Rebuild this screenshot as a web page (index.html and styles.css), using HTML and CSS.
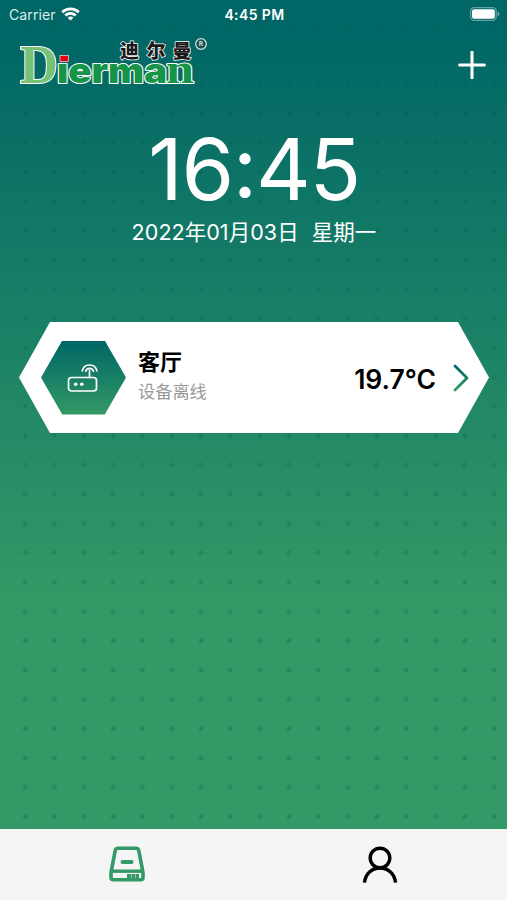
FILE: index.html
```
<!DOCTYPE html>
<html lang="zh-CN">
<head>
    <meta charset="UTF-8">
    <meta name="viewport" content="width=device-width, initial-scale=1.0">
    <title>Dierman</title>
    <link rel="stylesheet" href="styles.css">
</head>
<body>
    <div class="status-bar">
        <div class="carrier">
            <span>Carrier</span>
            <svg width="19" height="14" viewBox="0 0 19 14" fill="none" stroke="#fff" stroke-width="2.7">
                <path d="M1.2 5.2a12 12 0 0 1 16.6 0"/>
                <path d="M4.3 8.5a7.5 7.5 0 0 1 10.4 0"/>
                <path d="M9.5 13.6 6.6 10.8a4.2 4.2 0 0 1 5.8 0z" fill="#fff" stroke="none"/>
            </svg>
        </div>
        <div class="status-time">4:45 PM</div>
        <svg class="battery" width="30" height="14" viewBox="0 0 30 14">
            <rect x=".6" y=".6" width="25.6" height="12.8" rx="3.6" fill="none" stroke="#fff" stroke-opacity=".4" stroke-width="1.2"/>
            <rect x="2" y="2.2" width="22.8" height="9.6" rx="2" fill="#fff"/>
            <path d="M27.6 4.8q1.8.6 1.8 2.2t-1.8 2.2z" fill="#fff" fill-opacity=".5"/>
        </svg>
    </div>

    <header class="header">
        <svg class="logo" width="200" height="60" viewBox="0 0 200 60">
            <text class="logo-d" x="5" y="46.500" textLength="38" lengthAdjust="spacingAndGlyphs">D</text>
            <text class="logo-name" x="42" y="46.500" textLength="110" lengthAdjust="spacingAndGlyphs">ıerma</text>
            <text class="logo-n" x="151" y="46.500" textLength="28" lengthAdjust="spacingAndGlyphs">n</text>
            <rect x="45" y="19.500" width="8.500" height="6" fill="#e60012" stroke="#fff" stroke-width=".6"/>
            <text class="logo-cn" x="105 131.500 157.500" y="21.500">迪尔曼</text>
            <circle cx="186" cy="8" r="5.300" fill="#333" fill-opacity=".45" stroke="#d5dddd" stroke-width="1.300"/>
            <text class="logo-reg" x="183.700" y="10.300">R</text>
        </svg>
        <svg class="add" width="28" height="28" viewBox="0 0 28 28">
            <path d="M1.6 14h24.8M14 1.2v25.6" stroke="#fff" stroke-width="3" stroke-linecap="round"/>
        </svg>
    </header>

    <main class="content">
        <div class="clock">16<span class="colon">:</span>45</div>
        <div class="date"><span>2022年01月03日</span><span>星期一</span></div>

        <div class="device-card">
            <div class="device-icon">
                <svg width="32" height="30" viewBox="0 0 32 30" fill="none" stroke="#fff" stroke-width="1.700" stroke-linecap="round">
                    <rect x="1.500" y="14.500" width="28" height="13.500" rx="3"/>
                    <path d="M22.500 14.500V7.500M15.300 7.800a7.500 7.500 0 0 1 14.600 0M18.700 8.300a4.100 4.100 0 0 1 7.800 0"/>
                    <circle cx="8.700" cy="21.300" r="1.800" fill="#fff" stroke="none"/>
                    <circle cx="14.800" cy="21.300" r="1.800" fill="#fff" stroke="none"/>
                </svg>
            </div>
            <div class="device-info">
                <div class="device-name">客厅</div>
                <div class="device-state">设备离线</div>
            </div>
            <div class="temperature">19.7°C</div>
            <svg class="arrow" width="16" height="28" viewBox="0 0 16 28">
                <defs>
                    <linearGradient id="arrow-gradient" x1="0" y1="0" x2="0" y2="1">
                        <stop offset="0" stop-color="#006666"/>
                        <stop offset="1" stop-color="#339966"/>
                    </linearGradient>
                </defs>
                <path d="M2 2l12 12L2 26" fill="none" stroke="url(#arrow-gradient)" stroke-width="2.8" stroke-linecap="round" stroke-linejoin="round"/>
            </svg>
        </div>
    </main>

    <nav class="tab-bar">
        <a class="tab">
            <svg width="38" height="38" viewBox="0 0 38 38" fill="none" stroke="#339966" stroke-width="3.6" stroke-linejoin="round">
                <path d="M10 3.200h18q2.400 0 2.800 2.400L35 27.500v5q0 2.300-2.300 2.300H5.300Q3 34.800 3 32.500v-5L7.200 5.600q.4-2.400 2.800-2.400z"/>
                <path d="M3.500 26.200h31" stroke-width="3.400"/>
                <path d="M14.500 17h9" stroke-width="4" stroke-linecap="round"/>
                <path d="M19 31h12" stroke-width="3.800" stroke-dasharray="4 .5"/>
            </svg>
        </a>
        <a class="tab">
            <svg width="38" height="38" viewBox="0 0 38 38" fill="none" stroke="#000" stroke-width="3.4">
                <circle cx="19" cy="13" r="9.800"/>
                <path d="M3.500 37.700C4.200 28.700 11 23 19 23s14.800 5.700 15.500 14.700"/>
            </svg>
        </a>
    </nav>
</body>
</html>
```
FILE: styles.css
```
* {
    box-sizing: border-box;
}

body {
    margin: 0;
    height: 900px;
    display: flex;
    flex-direction: column;
    overflow: hidden;
    font-family: Inter, "Noto Sans CJK SC", sans-serif;
    color: #fff;
    background:
        radial-gradient(circle at center, rgba(0, 90, 80, 0.27) 1.5px, transparent 3px) 10.6px 10.6px / 29.32px 29.32px,
        linear-gradient(#006666 30px, #339966 600px);
}

.status-bar {
    height: 28px;
    padding: 0 7px 0 9px;
    display: grid;
    grid-template-columns: 1fr auto 1fr;
    align-items: center;
    font-size: 14px;
}

.carrier {
    display: flex;
    align-items: center;
    gap: 5px;
    letter-spacing: 0.1px;
    color: #dceceb;
}

.status-time {
    font-weight: 600;
    letter-spacing: 0.4px;
}

.battery {
    justify-self: end;
    margin-top: -1px;
}

.header {
    height: 72px;
    padding: 8px 21px 0 15px;
    display: flex;
    justify-content: space-between;
}

.add {
    margin-top: 15px;
}

.logo {
    overflow: visible;
}

.logo text {
    stroke: #fff;
    paint-order: stroke;
    stroke-linejoin: round;
}

.logo-d {
    font: bold 54px "Liberation Serif", serif;
    fill: #78c278;
    stroke-width: 2px;
}

.logo-name {
    font: 900 34px Inter, sans-serif;
    fill: #169447;
    stroke-width: 2px;
}

.logo-n {
    font: bold 42px "Liberation Serif", serif;
    fill: #169447;
    stroke-width: 2px;
}

.logo-cn {
    font: 900 19px "Noto Sans CJK SC", sans-serif;
    fill: #201818;
    stroke-width: 1.5px;
}

.logo .logo-reg {
    font: bold 6.5px Inter, sans-serif;
    fill: #d5dddd;
    stroke: none;
}

.content {
    flex: 1;
    padding: 20px 18px 0 19px;
}

.clock {
    height: 100px;
    display: flex;
    justify-content: center;
    line-height: 100px;
    font-size: 85px;
    letter-spacing: -1.4px;
}

.colon {
    margin-top: -3px;
}

.date {
    height: 28px;
    margin-top: -2px;
    display: flex;
    justify-content: center;
    gap: 13px;
    line-height: 28px;
    font-size: 21.5px;
    letter-spacing: 0.05px;
}

.device-card {
    height: 111px;
    margin-top: 76px;
    padding: 0 20px 0 22px;
    display: flex;
    align-items: center;
    background: #fff;
    color: #000;
    clip-path: polygon(31px 0, calc(100% - 31px) 0, 100% 50%, calc(100% - 31px) 100%, 31px 100%, 0 50%);
}

.device-icon {
    width: 85px;
    height: 74px;
    display: flex;
    align-items: center;
    justify-content: center;
    background: linear-gradient(#006666, #339966);
    clip-path: polygon(25% 0, 75% 0, 100% 50%, 75% 100%, 25% 100%, 0 50%);
}

.device-icon svg {
    margin-right: 2px;
}

.device-info {
    flex: 1;
    margin: -4px 0 0 12px;
}

.device-name {
    line-height: 32px;
    font-size: 22px;
    font-weight: 700;
}

.device-state {
    line-height: 28px;
    font-size: 17.2px;
    color: #999;
}

.temperature {
    margin-top: 2px;
    font-size: 26.5px;
    font-weight: 600;
}

.arrow {
    margin-left: 17px;
}

.tab-bar {
    height: 71px;
    padding-top: 16px;
    display: flex;
    background: #f5f5f5;
}

.tab {
    flex: 1;
    display: flex;
    justify-content: center;
}
```
